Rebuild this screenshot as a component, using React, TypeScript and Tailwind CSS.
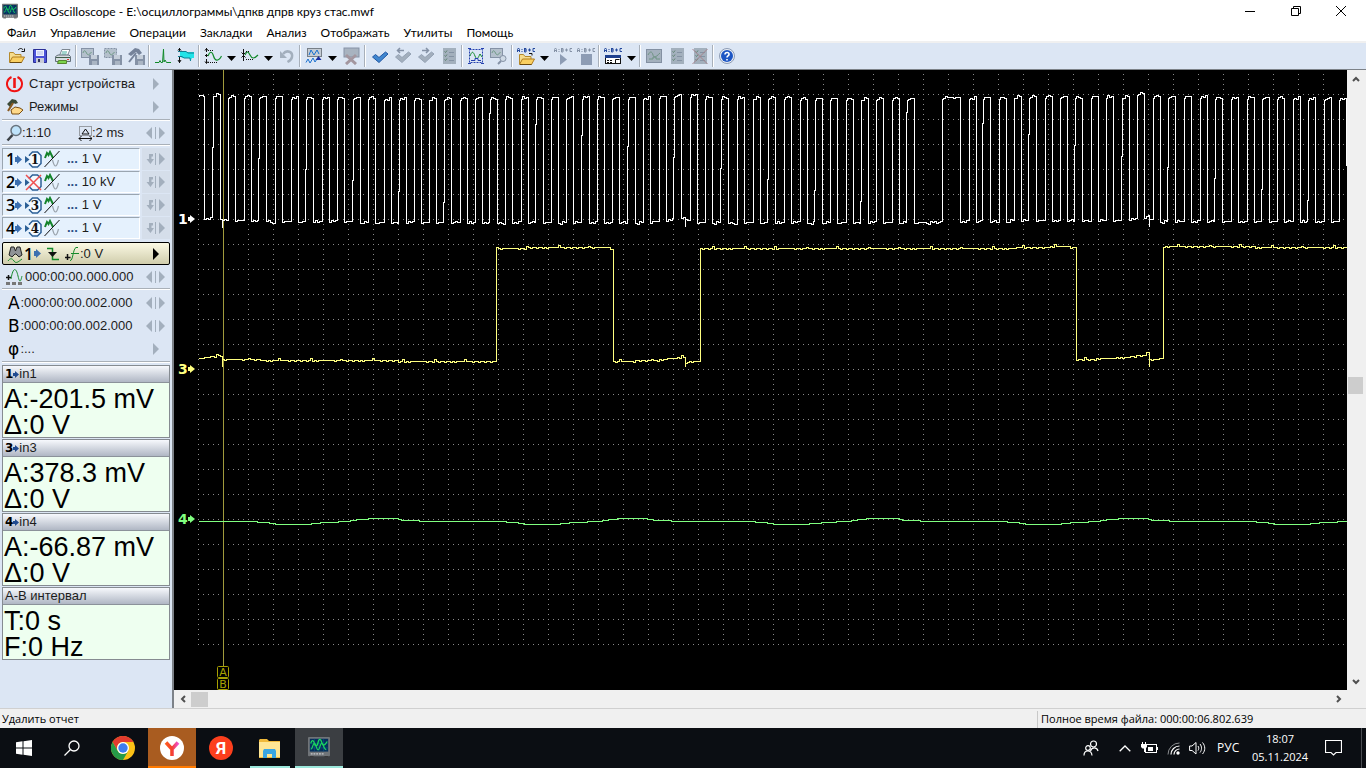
import { Fragment, ReactNode } from "react";

const MENU = ["Файл", "Управление", "Операции", "Закладки", "Анализ", "Отображать", "Утилиты", "Помощь"];

const GREY = "#a3afbd";
const GREY_DARK = "#8592a6";

function Svg({ w = 18, h = 18, children }: { w?: number; h?: number; children: ReactNode }) {
  return (
    <svg width={w} height={h} viewBox={`0 0 ${w} ${h}`} fill="none" className="shrink-0" aria-hidden="true">
      {children}
    </svg>
  );
}

/* ---------- shared glyphs ---------- */

function ScopeIcon({ size = 16 }: { size?: number }) {
  return (
    <svg width={size} height={size} viewBox="0 0 24 24" fill="none" className="shrink-0" aria-hidden="true">
      <rect x="0" y="1" width="24" height="21" rx="1" fill="#707478" />
      <rect x="2" y="3" width="20" height="14" fill="#06305c" />
      <path d="M2 8h20M2 13h20M7 3v14M12 3v14M17 3v14" stroke="#0d5a8c" strokeWidth="0.6" />
      <path d="M3 8c1-4 3-4 4 0s3 4 4-1 3-4 4 0 3 4 6-1" stroke="#19e05c" strokeWidth="1.4" />
      <path d="M3 14c2 1 2-6 4-6s2 7 4 7 2-7 4-7 2 7 5 7" stroke="#1cd060" strokeWidth="1.3" />
      <path d="M3 19.5h14" stroke="#c9ccd0" strokeWidth="1.5" strokeDasharray="2 1" />
      <path d="M2 22.5h4M18 22.5h4" stroke="#333" />
    </svg>
  );
}

function Folder({ x = 0, y = 0 }: { x?: number; y?: number }) {
  return (
    <g transform={`translate(${x} ${y})`}>
      <path d="M1.5 13V3.5h4l1.5 2h6V8" fill="#f6dc8c" stroke="#b58a2c" />
      <path d="M1.5 13.5 4.5 8h12l-3 5.5z" fill="#f9cf62" stroke="#b07c1e" />
      <path d="M2 13.5h11.5" stroke="#6b4a10" />
    </g>
  );
}

function Check({ fill, edge }: { fill: string; edge: string }) {
  return <path d="M1.5 10 4.5 7.5l3.5 3 6.5-5.5 2.5 2L8 15.5z" fill={fill} stroke={edge} strokeLinejoin="round" />;
}

function Screen({ x, y }: { x: number; y: number }) {
  return (
    <g transform={`translate(${x} ${y})`}>
      <rect x="0.5" y="0.5" width="12" height="9" fill="#b4c0cc" stroke={GREY_DARK} />
      <path d="M2 5c1-3 2-3 3.5 0s2.5 2 5-1" stroke="#6f9a86" />
    </g>
  );
}

function GreyDisk({ x, y }: { x: number; y: number }) {
  return (
    <g transform={`translate(${x} ${y})`}>
      <rect width="10" height="10" fill={GREY_DARK} />
      <rect x="2" width="6" height="4" fill="#c6cfda" />
      <rect x="3" y="6" width="5" height="4" fill="#aab5c3" />
    </g>
  );
}

function Abc({ color }: { color: string }) {
  return (
    <path
      d="M0.5 5V2.5L1.5 1l1 1.5V5M0.5 3.5h2M5 2v1M5 4v1M7.5 1v4M7.5 1.5h1.5v3.5h-1.5M7.5 3h2M11 3h3M12.5 1.5v3M18 1.5h-2v3h2"
      stroke={color}
    />
  );
}

function Report() {
  return (
    <>
      <rect x="3" y="1" width="13" height="16" fill="#a3b0bd" />
      <path d="M4.5 4.5l1 1 1.5-2M4.5 8.5l1 1 1.5-2M4.5 12.5l1 1 1.5-2" stroke="#5f8372" />
      <path d="M9 5.5h5M9 9.5h5M9 13.5h5" stroke="#8492a3" />
    </>
  );
}

/* ---------- toolbar ---------- */

const icons: Record<string, ReactNode> = {
  open: (
    <>
      <Folder y={2} />
      <path d="M10 3c2-2 4-2 5 0m1.5-1.5V4.5h-3" stroke="#111" />
    </>
  ),
  save: (
    <>
      <path d="M2.5 2.5h12l1 1v12h-13z" fill="#4a52d8" stroke="#2b2f96" />
      <rect x="5" y="3" width="8" height="6" fill="#eef2ff" />
      <path d="M6 5h6M6 7h6" stroke="#b2bce8" />
      <rect x="5" y="11" width="8" height="5" fill="#c8cbd6" />
      <rect x="7" y="12" width="2" height="3" fill="#30345e" />
    </>
  ),
  print: (
    <>
      <path d="M5.5 8.5 8 2.5h8l-2.5 6z" fill="#fff" stroke="#7d8792" />
      <path d="M8 5h5M7.5 7h5" stroke="#4a9" />
      <path d="M1.5 9.5 4 8h11l1.5 1.5v5h-15z" fill="#d6dde0" stroke="#64717c" />
      <path d="M2 10.5h14" stroke="#3f5d4a" />
      <path d="M4.5 13.5h8v3h-9z" fill="#7bd44c" stroke="#56852f" />
      <rect x="13" y="12" width="2" height="1" fill="#e03030" />
    </>
  ),
  saveScreen: (
    <>
      <Screen x={0} y={1} />
      <GreyDisk x={8} y={8} />
    </>
  ),
  saveArea: (
    <>
      <rect x="0.5" y="1.5" width="12" height="9" fill="#b4c0cc" stroke={GREY_DARK} strokeDasharray="2 1" />
      <path d="M2 6c1-3 2-3 3.5 0s2.5 2 5-1" stroke="#6f9a86" />
      <GreyDisk x={8} y={8} />
    </>
  ),
  tool: (
    <>
      <path d="M1 7 8 1l4 1 3 4-3 2-3-3-5 4z" fill="#76839a" />
      <path d="M9 6 2 15" stroke="#76839a" strokeWidth="2" />
      <GreyDisk x={8} y={8} />
    </>
  ),
  spike: <path d="M1 15.5h4l1-2 1 2h1.5L9.5 2l.5 13 1-2 1.5 2.5h4.5" stroke="#118a2a" />,
  cyan: (
    <>
      <path d="M2.5 1v4M2.5 10v6M1 3.5l1.5-2 1.5 2M1 13l1.5 2.5L4 13" stroke="#111" />
      <path d="M3 5h14v6h-2l-1.5 3-1-3H5L3 9z" fill="#22e4e8" />
      <path d="M1 4.5h8l2 1.5h6M1 9.5h4l2 1.5h6l.5 3" stroke="#137c90" />
    </>
  ),
  ampBig: (
    <>
      <path d="M2.5 1v4M2.5 12v4M1 3.5l1.5-2 1.5 2M1 14.5l1.5 2 1.5-2M1 8.5h3M2.5 7v3" stroke="#111" />
      <path d="M4 3.5h5M4 15.5h9" stroke="#111" strokeDasharray="1 1" />
      <path d="M4 9c2-5 4-5 5.5 0s5 6 8 0" stroke="#118a2a" strokeWidth="1.2" />
    </>
  ),
  ampSmall: (
    <>
      <path d="M2.5 2v12M.5 5.5l2 2 2-2M.5 10.5l2-2 2 2" stroke="#111" />
      <path d="M4 8c2-4 3-4 5 0s4 4 8 0" stroke="#118a2a" strokeWidth="1.2" />
      <path d="M5 4.5h4M5 12.5h8" stroke="#111" strokeDasharray="1 1" />
    </>
  ),
  undo: (
    <>
      <path d="M5 7c4-5 10-2 9 3-.5 3-2.5 4-4.5 5" stroke={GREY} strokeWidth="2.5" />
      <path d="M2 4v7h7z" fill={GREY} />
    </>
  ),
  mark: (
    <>
      <rect x="2.5" y="1.5" width="14" height="8" fill="#c5ccd4" stroke="#777f88" />
      <path d="M4 8l2-5 3 5 3-5 2 4" stroke="#1870d0" />
      <path d="M1 15.5 3 12l2 4 3-5 2 4 2-3" stroke="#1870d0" />
      <path d="M13.5 9l3 4h-6z" fill="#1a2ea0" />
    </>
  ),
  markDel: (
    <>
      <rect x="2" y="1" width="15" height="9" fill="#a8b3c0" stroke={GREY_DARK} />
      <path d="M4 8l10 9M14 8 4 17" stroke="#a3969f" strokeWidth="3" />
    </>
  ),
  check: <Check fill="#3f86cf" edge="#2257a3" />,
  checkPrev: (
    <>
      <Check fill={GREY} edge="#94a2b4" />
      <path d="M4 3.5h6M6 1 3.5 3.5 6 6" stroke={GREY_DARK} strokeWidth="1.5" />
    </>
  ),
  checkNext: (
    <>
      <Check fill={GREY} edge="#94a2b4" />
      <path d="M5 3.5h6M9 1l2.5 2.5L9 6" stroke={GREY_DARK} strokeWidth="1.5" />
    </>
  ),
  report: <Report />,
  select: (
    <>
      <rect x="2.5" y="2.5" width="13" height="13" stroke="#2440b0" strokeDasharray="2 1" />
      <path d="M1 1.5h3M14 1.5h3M1 16.5h3M14 16.5h3" stroke="#2440b0" />
      <path d="M3 9c2-5 3-5 5 0s3 2 5-2l2 3" stroke="#118a2a" />
      <path d="M4 13.5h4v-2h3v2h3" stroke="#2440b0" />
    </>
  ),
  find: (
    <>
      <Screen x={0} y={1} />
      <circle cx="13" cy="11.5" r="3" fill="#cfdae6" stroke={GREY_DARK} />
      <path d="M11 14 8 17" stroke={GREY_DARK} strokeWidth="2" />
    </>
  ),
  macroOpen: (
    <>
      <Abc color="#24489c" />
      <Folder x={1} y={4} />
      <path d="M12 6.5h3v2" stroke="#111" />
    </>
  ),
  macroPlay: (
    <>
      <Abc color={GREY_DARK} />
      <path d="M6 7v11l7-5.5z" fill="#8d9cb4" />
    </>
  ),
  macroStop: (
    <>
      <Abc color={GREY_DARK} />
      <rect x="4" y="7" width="11" height="11" fill="#8d9cb4" />
    </>
  ),
  macroWin: (
    <>
      <Abc color="#24489c" />
      <rect x="1.5" y="8.5" width="15" height="8" fill="#fff" stroke="#111" />
      <rect x="1" y="8" width="16" height="3" fill="#1d3f8e" />
      <path d="M3 13.5h5M3 15.5h5" stroke="#111" strokeDasharray="2 1" />
      <path d="M11.5 16v-3.5h4" stroke="#111" />
    </>
  ),
  scr: (
    <>
      <rect x="1.5" y="2.5" width="15" height="13" fill="#a3b0bd" stroke="#8390a2" />
      <path d="M3 8c2-4 4-4 5 0s4 1 7-2M4 12h4v-2h3v2h4" stroke="#6f9484" />
    </>
  ),
  reportDel: (
    <>
      <Report />
      <path d="M1.5 2 16.5 17M16.5 2 1.5 17" stroke="#a4848e" />
    </>
  ),
  help: (
    <>
      <circle cx="9" cy="9" r="7.5" fill="#e9eef6" stroke="#8c9bb4" />
      <circle cx="9" cy="9" r="6" fill="#1d56c4" />
      <path d="M7 7.5c0-3 4.5-2.5 4 0-.3 1.5-2 1.3-2 3M9 12v1.5" stroke="#fff" strokeWidth="1.6" />
    </>
  ),
};

// groups are divided by a separator; "v" stands for the small drop-down part of the previous button
const TOOLBAR: string[][] = [
  ["open", "save", "print"],
  ["saveScreen", "saveArea", "tool"],
  ["spike", "cyan"],
  ["ampBig", "v", "ampSmall", "v", "undo"],
  ["mark", "v", "markDel"],
  ["check", "checkPrev", "checkNext", "report"],
  ["select", "find"],
  ["macroOpen", "v", "macroPlay", "macroStop"],
  ["macroWin", "v"],
  ["scr", "report", "reportDel"],
  ["help"],
];

function Toolbar() {
  return (
    <div className="flex h-[26px] shrink-0 items-center bg-[#dce6f4] pl-[5px]">
      {TOOLBAR.map((group, g) => (
        <Fragment key={g}>
          {g > 0 && (
            <span className={g === 5 ? "flex w-[6px] justify-center" : "flex w-1 justify-center"}>
              <span className="h-[22px] w-[2px] border-r border-white bg-[#a8b0ba]" />
            </span>
          )}
          {group.map((name, i) =>
            name === "v" ? (
              <button key={i} aria-label="Ещё" className="flex h-6 w-[14px] items-center justify-center pt-1">
                <Svg w={9} h={5}>
                  <path d="M0 0h9L4.5 5z" fill="#000" />
                </Svg>
              </button>
            ) : (
              <button key={i} aria-label={name} className="flex h-6 w-[23px] items-center justify-center">
                <Svg>{icons[name]}</Svg>
              </button>
            )
          )}
        </Fragment>
      ))}
    </div>
  );
}

/* ---------- left panel ---------- */

function Arrow({ color = GREY }: { color?: string }) {
  return (
    <Svg w={6} h={12}>
      <path d="M0 0v12l6-6z" fill={color} />
    </Svg>
  );
}

function Spinner({ bent = false }: { bent?: boolean }) {
  return (
    <Svg w={19} h={12}>
      {bent ? (
        <path d="M7 1H3v5H0.500L4.500 11 8 6H5.500V3.500H7z" fill={GREY} />
      ) : (
        <path d="M6 0v12L0 6z" fill={GREY} />
      )}
      <path d="M9.5 0v12" stroke={GREY} />
      <path d="M13 0v12l6-6z" fill={GREY} />
    </Svg>
  );
}

function BlueArrow() {
  return (
    <Svg w={7} h={9}>
      <path d="M0 2h2V0l5 4.5L2 9V7H0z" fill="#3c6fb0" />
    </Svg>
  );
}

function SineSlash() {
  return (
    <Svg w={16} h={18}>
      <path d="M1 8 3 3l1.5 2L6 2l1.5 3L9 8" stroke="#14832b" strokeWidth="2" />
      <path d="M8.5 10c1 4 1.5 6 3 6s2-2 3-6" stroke="#9aa3ac" strokeWidth="1.2" />
      <path d="M.5 17 15.5 1" stroke="#111" />
    </Svg>
  );
}

function ChannelBadge({ n, off }: { n: number; off: boolean }) {
  return (
    <svg width="17" height="17" viewBox="0 0 17 17" fill="none" className="shrink-0" aria-hidden="true">
      <path d="M4.5 5V4l3-3h5L16 4.5v8L12.5 16h-5l-3-3v-1" fill="#f4faff" stroke="#2b5f96" strokeWidth="1.5" />
      <path d="M0 5 4.5 8.5 0 12z" fill="#2b5f96" />
      {off ? (
        <path d="M1 1l15 15M16 1 1 16" stroke="#f05050" strokeWidth="1.5" />
      ) : (
        <text x="10" y="13" textAnchor="middle" fontSize="12" fontWeight="700" fill="#111" fontFamily="DejaVu Serif, serif">
          {n}
        </text>
      )}
    </svg>
  );
}

const CHANNELS = [
  { n: 1, range: "1 V", off: false },
  { n: 2, range: "10 kV", off: true },
  { n: 3, range: "1 V", off: false },
  { n: 4, range: "1 V", off: false },
];

const READOUTS = [
  { n: 1, title: "in1", rows: ["A:-201.5 mV", "Δ:0 V"] },
  { n: 3, title: "in3", rows: ["A:378.3 mV", "Δ:0 V"] },
  { n: 4, title: "in4", rows: ["A:-66.87 mV", "Δ:0 V"] },
  { n: 0, title: "A-B интервал", rows: ["T:0 s", "F:0 Hz"] },
];

function Divider() {
  return <div className="mx-[2px] h-[2px] border-b border-white bg-[#a9b0b8]" />;
}

function Row({ children, right }: { children: ReactNode; right: ReactNode }) {
  return (
    <button className="flex h-[23px] w-full items-center pl-[6px] text-left">
      {children}
      <span className="ml-auto flex w-[26px] shrink-0 items-center">{right}</span>
    </button>
  );
}

function Letter({ children }: { children: string }) {
  return (
    <span className="flex w-[18px] items-center">
      <span className="w-[15px] pl-[2px] font-['DejaVu_Sans'] text-[17px] leading-5 text-black">{children}</span>:
    </span>
  );
}

function SidePanel() {
  return (
    <aside className="w-[174px] shrink-0 overflow-hidden border-r-2 border-[#7d8288] bg-[#dce6f4] pt-[2px] font-['Liberation_Sans',sans-serif] text-[13px] text-[#1c1c1c]">
      <Row right={<span className="pl-[7px]"><Arrow /></span>}>
        <Svg>
          <path d="M5.5 2a7.5 7.5 0 1 0 6 0" stroke="#f01414" strokeWidth="2" />
          <path d="M8.5 3v10" stroke="#f01414" strokeWidth="2.6" />
        </Svg>
        <span className="ml-[5px]">Старт устройства</span>
      </Row>
      <Row right={<span className="pl-[7px]"><Arrow /></span>}>
        <Svg>
          <path d="M1 6 6 1l4 1 2 3-3 1-1-1-4 4z" fill="#3c4a38" />
          <path d="m7 5-5 8" stroke="#8a5a20" strokeWidth="2" />
          <path d="M5 12l4-3 5 1 3 2-4 4H6z" fill="#ffd98a" stroke="#7a4e12" />
        </Svg>
        <span className="ml-[5px]">Режимы</span>
      </Row>
      <div className="h-px" />
      <Divider />
      <Row right={<Spinner />}>
        <Svg w={16} h={18}>
          <circle cx="10" cy="6.5" r="5" fill="#bfe3fb" stroke="#68737e" strokeWidth="1.5" />
          <path d="M6.5 11 1.5 16.5" stroke="#3b4046" strokeWidth="2.5" />
        </Svg>
        <span className="w-[56px]">:1:10</span>
        <Svg w={14} h={16}>
          <rect x="1.5" y="1.5" width="12" height="9" stroke="#555" strokeDasharray="1 1" />
          <path d="M7.5 4 4 9h7z" stroke="#111" />
          <path d="M1 13.5h13M3.5 11 1 13.5 3.500 16M11.5 11l2.5 2.5-2.5 2.5" stroke="#111" />
        </Svg>
        <span>:2 ms</span>
      </Row>
      <Divider />
      <div className="mt-[2px]">
        {CHANNELS.map((c) => (
          <button key={c.n} className="flex h-[23px] w-full pl-[2px] text-left">
            <span className="flex h-[22px] w-[138px] items-center border border-t-[#9aa5b0] border-r-white border-b-white border-l-[#9aa5b0] bg-[#e5f1fd] pl-[3px]">
              <span className="w-[9px] font-['Open_Sans'] text-[16px] leading-5 font-semibold text-black">{c.n}</span>
              <BlueArrow />
              <span className="w-[3px]" />
              <ChannelBadge n={c.n} off={c.off} />
              <span className="w-[2px]" />
              <SineSlash />
              <span className="ml-[7px] font-bold text-[#2b4f86]">...</span>
              <span className="ml-[4px]">{c.range}</span>
            </span>
            <span className="mr-[2px] ml-auto flex h-[22px] w-[28px] items-center bg-[#d5deea] pl-1">
              <Spinner bent />
            </span>
          </button>
        ))}
      </div>
      <div className="h-[2px]" />
      <button className="mx-[2px] flex h-[23px] w-[168px] items-center rounded-[2px] border border-black bg-linear-to-b from-[#fbf9e4] to-[#d0cdac] pl-[4px] text-left">
        <Svg w={17} h={18}>
          <path d="M2 10 4 2h3l1.5 4L10 2h3l2 8-3 2-3-3H8l-3 3z" fill="#8f9296" stroke="#222" />
          <path d="M1 16c2-3 4-3 6 0s4 1 8-2" stroke="#148a2a" />
        </Svg>
        <span className="w-[10px] font-['Open_Sans'] text-[16px] leading-5 font-semibold text-black">1</span>
        <BlueArrow />
        <span className="w-[6px]" />
        <Svg w={12} h={16}>
          <path d="M0 2.5h5.5v11H12" stroke="#148a2a" strokeWidth="1.5" />
          <path d="M1 6h9L5.5 11z" fill="#111" />
        </Svg>
        <span className="w-[6px]" />
        <Svg w={15} h={16}>
          <path d="M2.5 8v6M0 11.5h5.5" stroke="#111" strokeWidth="1.5" />
          <path d="M5 14.5c3 1 3-12 6-13h2M6 7.5h8" stroke="#148a2a" />
        </Svg>
        <span>:0 V</span>
        <span className="mr-[10px] ml-auto">
          <Arrow color="#000" />
        </span>
      </button>
      <Row right={<Spinner />}>
        <Svg w={19} h={18}>
          <path d="M0 9.5h5M2.5 7v5" stroke="#111" strokeWidth="1.5" />
          <path d="M5 11c2-12 5-12 7-3s3 4 4 0" stroke="#148a2a" />
          <path d="M0 15.5h17" stroke="#777" strokeWidth="3" strokeDasharray="4 2" />
        </Svg>
        <span>000:00:00.000.000</span>
      </Row>
      <Divider />
      <div className="h-px" />
      {["A", "B"].map((l) => (
        <Row key={l} right={<Spinner />}>
          <Letter>{l}</Letter>
          <span>000:00:00.002.000</span>
        </Row>
      ))}
      <Row right={<span className="pl-[7px]"><Arrow /></span>}>
        <Letter>φ</Letter>
        <span>...</span>
      </Row>
      <div className="h-px" />
      <Divider />
      <div className="mt-[2px] space-y-px">
        {READOUTS.map((r) => (
          <section key={r.title} className="mx-[2px] w-[168px] border border-[#858b91] bg-[#eefff0]">
            <h2 className="flex h-[17px] items-center border-b border-[#8b929a] bg-linear-to-b from-[#f7f9fd] to-[#b0b7c4] pl-[2px]">
              {r.n > 0 && (
                <span className="flex items-center font-['DejaVu_Sans'] text-[12px] font-bold text-black">
                  {r.n}
                  <Svg w={6} h={7}>
                    <path d="M0 2h2V0l4 3.5L2 7V5H0z" fill="#1f4a90" />
                  </Svg>
                </span>
              )}
              {r.title}
            </h2>
            <div className="h-[54px] pt-[3px] pl-px text-[27px] leading-[26px] whitespace-nowrap text-black">
              {r.rows.map((t) => (
                <p key={t}>{t}</p>
              ))}
            </div>
          </section>
        ))}
      </div>
    </aside>
  );
}

/* ---------- traces ---------- */

const NOISE = [0, 1, 0, -1, 0, 0, 1, 0, 2, 0, -1, 1, 0, 0, -1, 0, 1, 0, 0, 1, -1, 0, 0];
const noise = (i: number) => NOISE[Math.abs(Math.round(i)) % NOISE.length];

function between(points: number[][], x: number) {
  for (let i = 1; i < points.length; i++) {
    const [x0, y0] = points[i - 1];
    const [x1, y1] = points[i];
    if (x <= x1) return Math.round(y0 + ((y1 - y0) * (x - x0)) / (x1 - x0));
  }
  return points[points.length - 1][1];
}

const RISES = [
  198, 213, 228, 244, 259, 275, 291, 306, 322, 337, 353, 368, 384, 399, 414, 429, 444, 460, 475, 490, 505, 521, 536,
  551, 566, 582, 597, 612, 628, 643, 659, 674, 690, 705, 721, 737, 753, 768, 784, 800, 815, 830, 846, 861, 876, 892,
  907, 942, 969, 983, 999, 1014, 1029, 1045, 1060, 1075, 1091, 1106, 1122, 1137, 1153, 1168, 1184, 1200, 1215, 1231,
  1247, 1262, 1277, 1293, 1308, 1324, 1339,
];
const TOP = [[198, 95], [221, 93], [228, 96], [420, 98], [520, 97], [640, 97], [683, 94], [700, 97], [900, 98], [1040, 96], [1120, 96], [1137, 93], [1147, 93], [1153, 96], [1346, 98]];
const BOTTOM = [[198, 219], [218, 217], [225, 220], [400, 222], [650, 222], [684, 217], [690, 222], [910, 222], [1040, 220], [1120, 220], [1148, 216], [1153, 221], [1346, 221]];
const SPIKES = [222, 685, 1149];

function crankPath() {
  let d = "";
  RISES.forEach((rise, i) => {
    const fall = rise === 198 ? 204 : rise === 942 ? 960 : rise + 7;
    const next = RISES[i + 1] ?? 1346;
    const top = between(TOP, rise);
    const low = between(BOTTOM, fall);
    // edges may shift by a pixel part of the way
    const kink = 110 + ((i * 37) % 100);
    d += i === 0 ? `M${rise} ${top + 1}` : `V${kink}H${rise}V${top + 2}`;
    for (let x = rise + 1; x < fall; x += 2) d += `H${x}V${top + noise(x + i)}`;
    d += `H${fall}`;
    if (i === RISES.length - 1) {
      d += "V165";
      return;
    }
    d += `V${low + 1}`;
    for (let x = fall + 2; x < next - 1; x += 2) {
      const spike = SPIKES.find((s) => x >= s && x < s + 2);
      d += spike ? `H${spike}V${low + 9}V${low + 2}` : `H${x}V${between(BOTTOM, x) + noise(x + 3 * i)}`;
    }
    d += `H${next - (i % 3 === 0 ? 1 : 0)}`;
  });
  return d;
}

const CAM = [
  { from: 199, to: 222, pts: [[199, 358], [204, 357], [222, 355]] },
  { from: 223, to: 497, pts: [[223, 359], [300, 360], [497, 361]] },
  { from: 497, to: 614, pts: [[497, 248], [560, 247], [608, 247], [614, 249]] },
  { from: 614, to: 685, pts: [[614, 361], [655, 360], [670, 358], [685, 357]] },
  { from: 686, to: 700, pts: [[686, 362], [700, 360]] },
  { from: 701, to: 1077, pts: [[701, 248], [1000, 248], [1065, 246], [1077, 247]] },
  { from: 1077, to: 1149, pts: [[1077, 359], [1115, 358], [1149, 354]] },
  { from: 1150, to: 1163, pts: [[1150, 359], [1163, 358]] },
  { from: 1164, to: 1347, pts: [[1164, 246], [1347, 247]] },
];

function camPath() {
  let d = "";
  CAM.forEach((s, i) => {
    d += i === 0 ? `M${s.from} ${s.pts[0][1]}` : `H${s.from}`;
    if (SPIKES.includes(s.from - 1)) d += "V366";
    for (let x = s.from; x < s.to; x += 2) {
      const bump = x % 31 < 2 ? -2 : 0;
      d += `H${x}V${between(s.pts, x) + (noise(x * 3) > 0 ? 1 : 0) + bump}`;
    }
    d += `H${s.to}`;
  });
  return d;
}

function slowPath() {
  const pts = [[0, 521], [48, 521], [66, 522], [78, 524], [105, 524], [126, 522], [148, 521], [160, 519], [175, 518], [196, 518], [205, 520], [236, 521], [250, 521]];
  let d = "M198 521";
  for (let x = 200; x < 1347; x += 3) d += `H${x}V${between(pts, (x - 198) % 250)}`;
  return d;
}

function Grid() {
  const cols = Array.from({ length: 46 }, (_, i) => 198.5 + i * 25);
  const rows = Array.from({ length: 23 }, (_, i) => 94.5 + i * 25);
  return (
    <g stroke="#8a8a8a" strokeDasharray="1 4">
      {cols.map((x) => (
        <path key={x} d={`M${x} 74V645`} />
      ))}
      {rows.map((y) => (
        <path key={y} d={`M198 ${y}H1346`} />
      ))}
    </g>
  );
}

function TraceLabel({ n, y, color }: { n: number; y: number; color: string }) {
  return (
    <g fill={color}>
      <text x="178" y={y + 5} fontSize="14" fontWeight="700" fontFamily="DejaVu Sans, sans-serif">
        {n}
      </text>
      <path d={`M188 ${y - 2}h2v-2l5 4-5 4v-2h-2z`} />
    </g>
  );
}

function CursorLabel({ name, y }: { name: string; y: number }) {
  return (
    <g>
      <rect x="217.5" y={y + 0.5} width="11" height="11" rx="1" stroke="#a8a000" fill="#000" />
      <text x="223" y={y + 10} textAnchor="middle" fontSize="11" fill="#a8a000" fontFamily="DejaVu Sans, sans-serif">
        {name}
      </text>
    </g>
  );
}

function Plot() {
  return (
    <svg className="block min-w-0 flex-1 bg-black" role="img" aria-label="Осциллограмма" fill="none">
      <g transform="translate(-174 -70)">
        <g shapeRendering="crispEdges">
          <Grid />
          <path d="M223.5 70V666" stroke="#a09a3c" />
          <path d={crankPath()} stroke="#ffffff" transform="translate(.5 .5)" />
          <path d={camPath()} stroke="#ffff80" transform="translate(-.5 .5)" />
          <path d={slowPath()} stroke="#80ff80" transform="translate(.5 .5)" />
        </g>
        <TraceLabel n={1} y={219} color="#ffffff" />
        <TraceLabel n={3} y={369} color="#ffff80" />
        <TraceLabel n={4} y={519} color="#80ff80" />
        <CursorLabel name="A" y={666} />
        <CursorLabel name="B" y={678} />
      </g>
    </svg>
  );
}

function Chevron({ d, label, className }: { d: string; label: string; className: string }) {
  return (
    <button aria-label={label} className={className}>
      <Svg w={8} h={8}>
        <path d={d} stroke="#505050" strokeWidth="2" />
      </Svg>
    </button>
  );
}

/* ---------- taskbar ---------- */

function Taskbar() {
  return (
    <footer className="flex h-10 shrink-0 items-stretch bg-[#0b0e13] text-white">
      <button aria-label="Пуск" className="flex w-12 items-center justify-center">
        <Svg w={16} h={16}>
          <path d="M0 2.2 6.5 1.3v6.2H0zM7.5 1.2 16 0v7.5H7.5zM0 8.5h6.5v6.2L0 13.8zM7.5 8.5H16V16l-8.5-1.2z" fill="#fff" />
        </Svg>
      </button>
      <button aria-label="Поиск" className="flex w-12 items-center justify-center">
        <Svg w={16} h={16}>
          <circle cx="10" cy="6" r="5" stroke="#fff" strokeWidth="1.3" />
          <path d="M6.5 9.5.5 15.5" stroke="#fff" strokeWidth="1.3" />
        </Svg>
      </button>
      <div className="ml-[3px] flex gap-px">
        <button aria-label="Chrome" className="flex w-12 items-center justify-center">
          <Svg w={24} h={24}>
            <circle cx="12" cy="12" r="12" fill="#fbc116" />
            <path d="M1.6 6A12 12 0 0 1 22.4 6H12a6 6 0 0 0-5.200 9z" fill="#e33b2e" />
            <path d="M1.6 6A12 12 0 0 0 12 24l5.200-9a6 6 0 0 1-10.4 0z" fill="#269b48" />
            <circle cx="12" cy="12" r="6" fill="#fff" />
            <circle cx="12" cy="12" r="4.7" fill="#3d7df0" />
          </Svg>
        </button>
        <button aria-label="Яндекс Браузер" className="flex w-12 items-center justify-center border-b-2 border-[#ff7a00] bg-[#a95c20] pt-[2px]">
          <Svg w={24} h={24}>
            <defs>
              <linearGradient id="yb" x1="6" y1="6" x2="18" y2="6" gradientUnits="userSpaceOnUse">
                <stop stopColor="#ff5a1e" />
                <stop offset="0.5" stopColor="#f4402c" />
                <stop offset="1" stopColor="#f050d0" />
              </linearGradient>
            </defs>
            <circle cx="12" cy="12" r="12" fill="#fff" />
            <path d="M6 6.5 12 13l6-6.5M12 12v8" stroke="url(#yb)" strokeWidth="3.6" />
          </Svg>
        </button>
        <button aria-label="Яндекс" className="flex w-12 items-center justify-center">
          <span className="flex size-6 items-center justify-center rounded-full bg-[#fc3f1d] font-['Roboto'] text-[17px] leading-6 font-bold">Я</span>
        </button>
        <button aria-label="Проводник" className="flex w-12 items-center justify-center">
          <span className="flex h-full w-10 items-center justify-center border-b-2 border-[#9ce8dc] pt-[2px]">
            <Svg w={22} h={19}>
              <path d="M0 2V1l1-1h7l2 2h11v17H0z" fill="#f0b93a" />
              <path d="M0 3h21v15H0z" fill="#ffe694" />
              <path d="M4 19v-7l1-2h11l1 2v7h-4v-4H8v4z" fill="#3aa6e4" />
            </Svg>
          </span>
        </button>
        <button aria-label="USB Oscilloscope" className="flex w-12 items-center justify-center border-b-2 border-[#9ce8dc] bg-[#3b3e42]">
          <ScopeIcon size={22} />
        </button>
      </div>

      <div className="ml-auto flex items-center">
        <button aria-label="Люди" className="w-9">
          <Svg w={16} h={16}>
            <circle cx="10.5" cy="4" r="3" stroke="#fff" strokeWidth="1.2" />
            <circle cx="5" cy="8" r="2.3" stroke="#fff" strokeWidth="1.2" />
            <path d="M7.5 11c1-4 6.5-4.5 7.5 0M1 15.5c0-6 7.5-6 8 0" stroke="#fff" strokeWidth="1.2" />
          </Svg>
        </button>
        <button aria-label="Скрытые значки" className="w-[22px]">
          <Svg w={12} h={7}>
            <path d="m.7 6.3 5.3-5.3 5.3 5.3" stroke="#fff" strokeWidth="1.3" />
          </Svg>
        </button>
        <button aria-label="Батарея" className="w-[26px]">
          <Svg w={17} h={12}>
            <rect x="4.5" y="2.5" width="11" height="8" stroke="#fff" />
            <rect x="7" y="5" width="5" height="4" fill="#fff" />
            <path d="M16.5 5v3M1.5 0v2M4.5 0v2M3.5 5v5" stroke="#fff" />
            <path d="M0 2h6v3L4.500 6.500h-3L0 5z" fill="#fff" />
          </Svg>
        </button>
        <button aria-label="Сеть" className="w-[22px]">
          <Svg w={13} h={13}>
            <path d="M1 12.5A11.5 11.5 0 0 1 12.5 1" stroke="#8d8f92" />
            <path d="M4 12.5A8.5 8.5 0 0 1 12.5 4M7 12.5a5.5 5.5 0 0 1 5.5-5.5" stroke="#fff" strokeWidth="1.2" />
            <circle cx="11" cy="11" r="1.7" fill="#fff" />
          </Svg>
        </button>
        <button aria-label="Громкость" className="w-7">
          <Svg w={17} h={14}>
            <path d="M.6 5v4.5h2.5L7 13V1.5L3 5z" stroke="#fff" />
            <path d="M9 5c1 1.5 1 3 0 4.5M11 3c2 2.5 2 6 0 8.5M13.5 1.5c3 3.5 3 8 0 11.5" stroke="#fff" />
          </Svg>
        </button>
        <button className="w-8 text-left text-[12px]">РУС</button>
        <button className="w-[62px] text-center leading-[18px]">
          18:07
          <br />
          05.11.2024
        </button>
        <button aria-label="Уведомления" className="flex w-[50px] justify-center pr-[6px]">
          <Svg w={17} h={16}>
            <path d="M.5.5h16v12H11L8.5 15 6 12.5H.5z" stroke="#fff" strokeWidth="1.2" />
          </Svg>
        </button>
        <span className="mr-1 h-10 w-px bg-[#4a4d52]" />
      </div>
    </footer>
  );
}

export default function App() {
  return (
    <div className="flex h-screen flex-col overflow-hidden bg-[#f0f0f0] font-['Open_Sans',sans-serif] text-[11px] text-black">
      <header className="flex h-[22px] shrink-0 items-center bg-white pl-[2px]">
        <ScopeIcon />
        <h1 className="ml-[5px] pt-px font-['Lato',sans-serif] text-[12px] whitespace-nowrap">
          USB Oscilloscope - E:\осциллограммы\дпкв дпрв круз стас.mwf
        </h1>
        <div className="ml-auto flex pr-[2px]">
          <button aria-label="Свернуть" className="flex h-5 w-[46px] items-center justify-center">
            <Svg w={10} h={10}>
              <path d="M0 5.5h10" stroke="#000" />
            </Svg>
          </button>
          <button aria-label="Восстановить" className="flex h-5 w-[45px] items-center justify-center">
            <Svg w={10} h={10}>
              <path d="M.5 2.5h7v7h-7zM2.5 2V.5h7v7H8" stroke="#000" />
            </Svg>
          </button>
          <button aria-label="Закрыть" className="flex h-5 w-[46px] items-center justify-center">
            <Svg w={10} h={10}>
              <path d="M0 0l10 10M10 0 0 10" stroke="#000" />
            </Svg>
          </button>
        </div>
      </header>
      <nav className="flex h-[21px] shrink-0 items-center gap-[14px] border-b-2 border-[#f0f0f0] bg-white pt-[3px] pl-[7px] font-['Lato',sans-serif] text-[12px]">
        {MENU.map((m) => (
          <button key={m}>{m}</button>
        ))}
      </nav>
      <Toolbar />
      <main className="flex min-h-0 flex-1 border-t border-[#7d8288]">
        <SidePanel />
        <div className="flex min-w-0 flex-1 flex-col">
          <div className="flex min-h-0 flex-1">
            <Plot />
            <div className="flex w-[19px] shrink-0 flex-col items-center pr-[2px]">
              <Chevron label="Вверх" d="M1 6l3-3 3 3" className="flex h-[17px] items-center" />
              <div className="h-[290px]" />
              <div className="h-[17px] w-[15px] bg-[#cdcdcd]" />
              <Chevron label="Вниз" d="M1 2l3 3 3-3" className="mt-auto flex h-[17px] items-center" />
            </div>
          </div>
          <div className="flex h-[18px] shrink-0 items-center pr-[19px]">
            <Chevron label="Влево" d="M6 1 3 4l3 3" className="flex w-[17px] justify-center" />
            <div className="h-[15px] w-[17px] bg-[#cdcdcd]" />
            <Chevron label="Вправо" d="M2 1l3 3-3 3" className="ml-auto flex w-[17px] justify-center" />
          </div>
        </div>
      </main>
      <div className="flex h-5 shrink-0 items-center border-t border-[#d0d0d0] bg-[#f0f0f0] pt-[2px]">
        <span className="flex-1 pl-[2px]">Удалить отчет</span>
        <span className="w-[329px] border-l border-[#c8c8c8] pl-[3px]">Полное время файла: 000:00:06.802.639</span>
      </div>
      <Taskbar />
    </div>
  );
}
